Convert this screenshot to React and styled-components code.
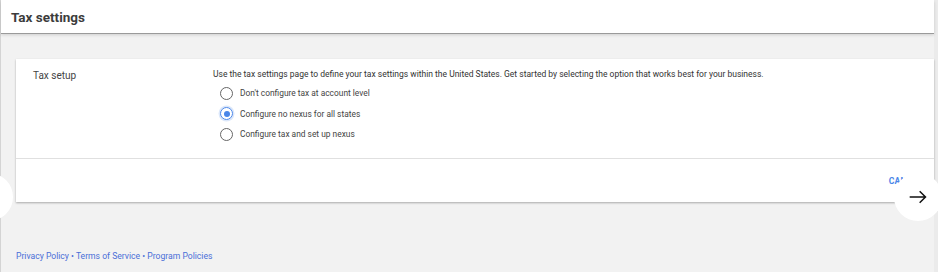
import React from "react";
import styled, { createGlobalStyle } from "styled-components";

const GlobalStyle = createGlobalStyle`
  html, body { margin: 0; padding: 0; }
  body {
    background: #f2f2f2;
    font-family: Roboto, "Noto Sans", Arial, sans-serif;
    color: #333;
  }
`;

const Page = styled.div`
  display: flex;
  height: 272px;
  overflow: hidden;
`;

const Main = styled.div`
  position: relative;
  flex: 1;
  border-left: 1px solid #d4d4d4;
  background: #f2f2f2;
`;

const Strip = styled.div`
  width: 4px;
  background: #ebebeb;
`;

const Header = styled.header`
  height: 33px;
  background: #fff;
  box-shadow: 0 1px 0 #9a9a9a, 0 2px 3px rgba(0, 0, 0, 0.15);
  display: flex;
  align-items: center;
  padding-left: 10px;
  position: relative;
  z-index: 1;
`;

const Title = styled.h1`
  margin: 0;
  font-size: 13.5px;
  font-weight: 700;
  color: #3c3c3c;
`;

const Content = styled.div`
  padding: 26px 0 0 15px;
`;

const Card = styled.section`
  background: #fff;
  box-shadow: 0 1px 2px rgba(0, 0, 0, 0.3);
`;

const Row = styled.div`
  display: grid;
  grid-template-columns: 180px 1fr;
  padding: 10px 0 0 17px;
  height: 89px;
  border-bottom: 1px solid #e0e0e0;
`;

const Label = styled.div`
  font-size: 10px;
  color: #444;
  padding-top: 1px;
`;

const Desc = styled.p`
  margin: 0 0 7px;
  font-size: 8.5px;
  color: #333;
`;

const Options = styled.div`
  display: flex;
  flex-direction: column;
  gap: 6.5px;
  padding-left: 7px;
`;

const Option = styled.label`
  display: flex;
  align-items: center;
  gap: 7px;
  font-size: 8.4px;
  color: #444;
  height: 14px;
`;

const Radio = styled.span`
  box-sizing: border-box;
  width: 13px;
  height: 13px;
  border-radius: 50%;
  border: 1.5px solid ${(p) => (p.$checked ? "#4a86e8" : "#666")};
  box-shadow: ${(p) => (p.$checked ? "0 0 0 1.5px rgba(74,134,232,0.2)" : "none")};
  display: flex;
  align-items: center;
  justify-content: center;
  &::after {
    content: "";
    width: 6px;
    height: 6px;
    border-radius: 50%;
    background: ${(p) => (p.$checked ? "#4a86e8" : "transparent")};
  }
`;

const Actions = styled.div`
  height: 43px;
  display: flex;
  justify-content: flex-end;
  align-items: center;
  padding-right: 11px;
`;

const TextButton = styled.span`
  font-size: 8.6px;
  font-weight: 700;
  color: #4a86e8;
  letter-spacing: 0.3px;
  margin-top: 1px;
`;

const Footer = styled.footer`
  padding-top: 49px;
  font-size: 8.6px;
  color: #4a6fd8;
`;

const Circle = styled.div`
  position: absolute;
  width: 48px;
  height: 48px;
  border-radius: 50%;
  background: #fff;
  display: flex;
  align-items: center;
  justify-content: center;
  top: 173px;
  left: ${(p) => p.$left}px;
  z-index: 2;
`;

const options = [
  "Don't configure tax at account level",
  "Configure no nexus for all states",
  "Configure tax and set up nexus",
];

export default function App() {
  return (
    <>
      <GlobalStyle />
      <Page>
        <Main>
          <Header>
            <Title>Tax settings</Title>
          </Header>
          <Content>
            <Card>
              <Row>
                <Label>Tax setup</Label>
                <div>
                  <Desc>
                    Use the tax settings page to define your tax settings within the United States. Get started by selecting the option that works best for your business.
                  </Desc>
                  <Options>
                    {options.map((o, i) => (
                      <Option key={o}>
                        <Radio $checked={i === 1} />
                        {o}
                      </Option>
                    ))}
                  </Options>
                </div>
              </Row>
              <Actions>
                <TextButton>CANCEL</TextButton>
              </Actions>
            </Card>
            <Footer>Privacy Policy • Terms of Service • Program Policies</Footer>
          </Content>
          <Circle $left={-36} />
          <Circle $left={893}>
            <svg width="20" height="20" viewBox="0 0 24 24" fill="none" stroke="#111" strokeWidth="1.8">
              <path d="M2 12h19M14 5l7 7-7 7" />
            </svg>
          </Circle>
        </Main>
        <Strip />
      </Page>
    </>
  );
}
